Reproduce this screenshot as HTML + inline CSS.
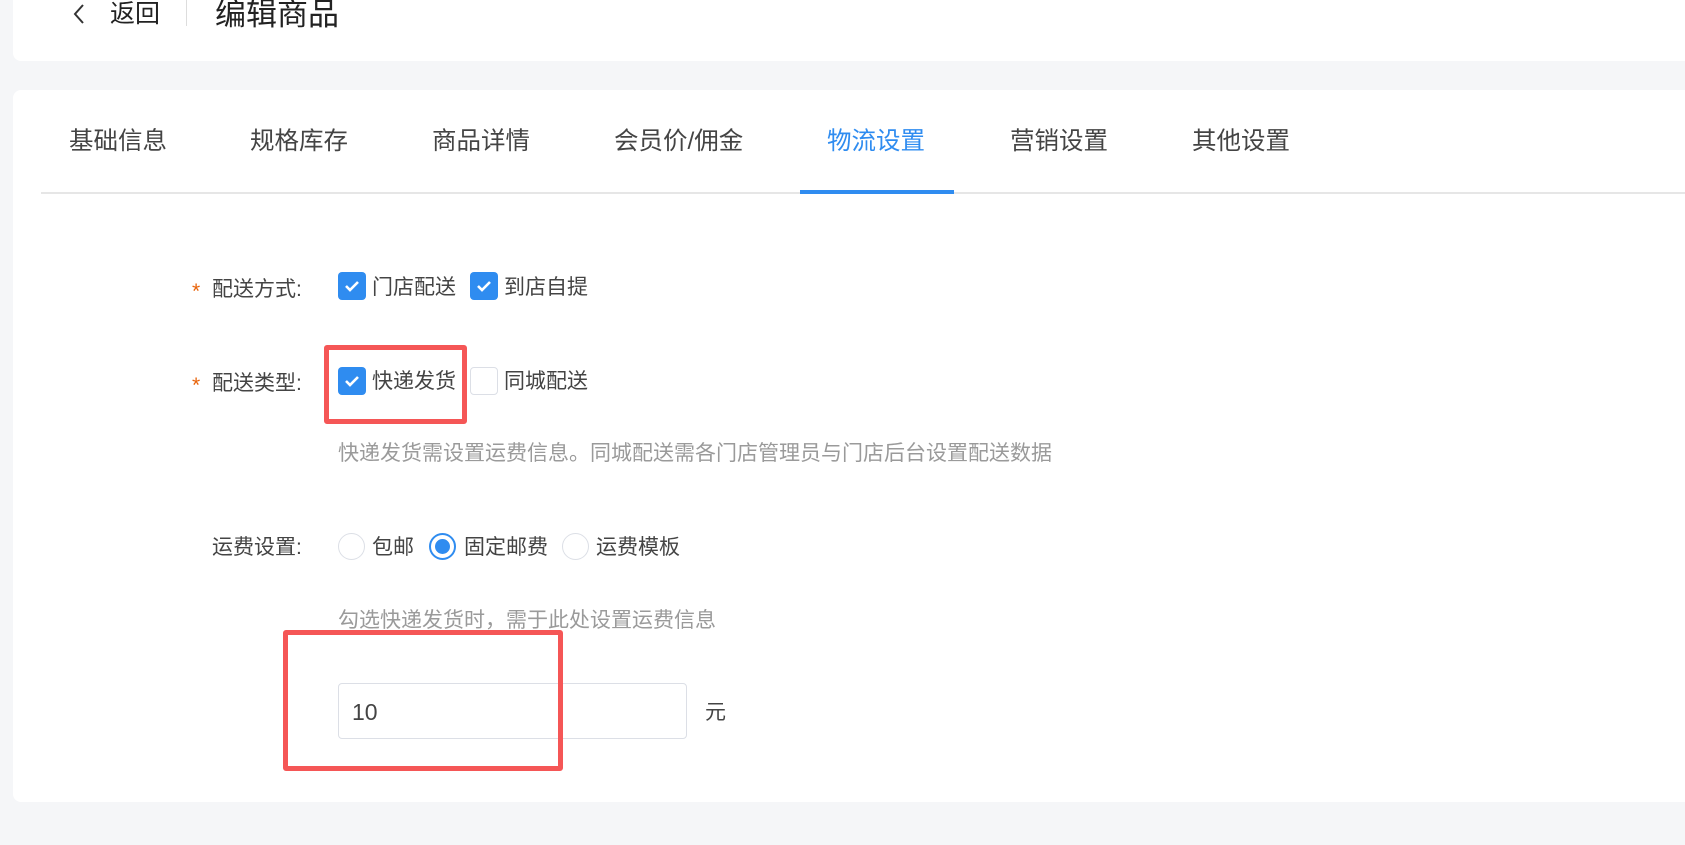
<!DOCTYPE html>
<html><head><meta charset="utf-8"><style>
*{margin:0;padding:0;box-sizing:border-box}
body{width:1685px;height:845px;background:#f5f6f8;font-family:"Liberation Sans","Noto Sans CJK SC",sans-serif;position:relative;overflow:hidden;color:#333}
.abs{position:absolute;white-space:nowrap}
.card{position:absolute;background:#fff;border-radius:8px}
.tab{position:absolute;top:128px;font-size:24.5px;color:#444;line-height:28px}
.lbl{font-size:21px;color:#444;line-height:24px}
.cb{position:absolute;width:28px;height:28px;border-radius:4px;background:#2f8cf0}
.cb.off{background:#fff;border:1px solid #dcdfe6}
.cb svg{position:absolute;left:6px;top:7px}
.rd{position:absolute;width:27px;height:27px;border-radius:50%;border:1px solid #dcdfe6;background:#fff}
.rd.on{border:2px solid #2f8cf0}
.rd.on::after{content:"";position:absolute;left:4px;top:4px;width:15px;height:15px;border-radius:50%;background:#2f8cf0}
.hint{font-size:21px;color:#9a9a9a;line-height:24px}
.star{color:#e8630a;font-size:21px}
.red{position:absolute;border:5px solid #f55656;border-radius:3px}
</style></head><body>
<div class="card" style="left:13px;top:-10px;width:1700px;height:71px"></div>
<svg class="abs" style="left:72px;top:3px" width="14" height="22" viewBox="0 0 14 22"><path d="M11 2 L3 11 L11 20" fill="none" stroke="#333" stroke-width="2"/></svg>
<div class="abs" style="left:110px;top:0px;font-size:25px;line-height:28px;color:#222">返回</div>
<div class="abs" style="left:186px;top:0;width:1px;height:26px;background:#ddd"></div>
<div class="abs" style="left:215px;top:-2px;font-size:31px;line-height:34px;color:#222">编辑商品</div>

<div class="card" style="left:13px;top:90px;width:1700px;height:712px"></div>
<div class="abs" style="left:41px;top:192px;width:1660px;height:2px;background:#e6e6e6"></div>
<div class="abs" style="left:800px;top:190px;width:154px;height:4px;background:#2f8cf0"></div>
<div class="tab" style="left:69px">基础信息</div>
<div class="tab" style="left:250px">规格库存</div>
<div class="tab" style="left:432px">商品详情</div>
<div class="tab" style="left:614px">会员价/佣金</div>
<div class="tab" style="left:827px;color:#2f8cf0">物流设置</div>
<div class="tab" style="left:1010px">营销设置</div>
<div class="tab" style="left:1192px">其他设置</div>

<div class="abs star" style="left:192px;top:280px">*</div>
<div class="abs lbl" style="left:212px;top:278px">配送方式:</div>
<div class="cb" style="left:338px;top:272px"><svg width="16" height="14" viewBox="0 0 16 14"><path d="M2 7 L6 11 L14 3" fill="none" stroke="#fff" stroke-width="2.6"/></svg></div>
<div class="abs lbl" style="left:372px;top:276px">门店配送</div>
<div class="cb" style="left:470px;top:272px"><svg width="16" height="14" viewBox="0 0 16 14"><path d="M2 7 L6 11 L14 3" fill="none" stroke="#fff" stroke-width="2.6"/></svg></div>
<div class="abs lbl" style="left:504px;top:276px">到店自提</div>

<div class="abs star" style="left:192px;top:374px">*</div>
<div class="abs lbl" style="left:212px;top:372px">配送类型:</div>
<div class="cb" style="left:338px;top:367px"><svg width="16" height="14" viewBox="0 0 16 14"><path d="M2 7 L6 11 L14 3" fill="none" stroke="#fff" stroke-width="2.6"/></svg></div>
<div class="abs lbl" style="left:372px;top:370px">快递发货</div>
<div class="cb off" style="left:470px;top:367px"></div>
<div class="abs lbl" style="left:504px;top:370px">同城配送</div>
<div class="red" style="left:324px;top:345px;width:143px;height:79px"></div>

<div class="abs hint" style="left:338px;top:442px">快递发货需设置运费信息。同城配送需各门店管理员与门店后台设置配送数据</div>

<div class="abs lbl" style="left:212px;top:536px">运费设置:</div>
<div class="rd" style="left:338px;top:533px"></div>
<div class="abs lbl" style="left:372px;top:536px">包邮</div>
<div class="rd on" style="left:429px;top:533px"></div>
<div class="abs lbl" style="left:464px;top:536px">固定邮费</div>
<div class="rd" style="left:562px;top:533px"></div>
<div class="abs lbl" style="left:596px;top:536px">运费模板</div>

<div class="abs hint" style="left:338px;top:609px">勾选快递发货时，需于此处设置运费信息</div>

<div class="abs" style="left:338px;top:683px;width:349px;height:56px;border:1px solid #dcdfe6;border-radius:4px;background:#fff"></div>
<div class="abs" style="left:352px;top:699px;font-size:23px;line-height:26px;color:#444">10</div>
<div class="abs lbl" style="left:705px;top:701px">元</div>
<div class="red" style="left:283px;top:630px;width:280px;height:141px"></div>
</body></html>
